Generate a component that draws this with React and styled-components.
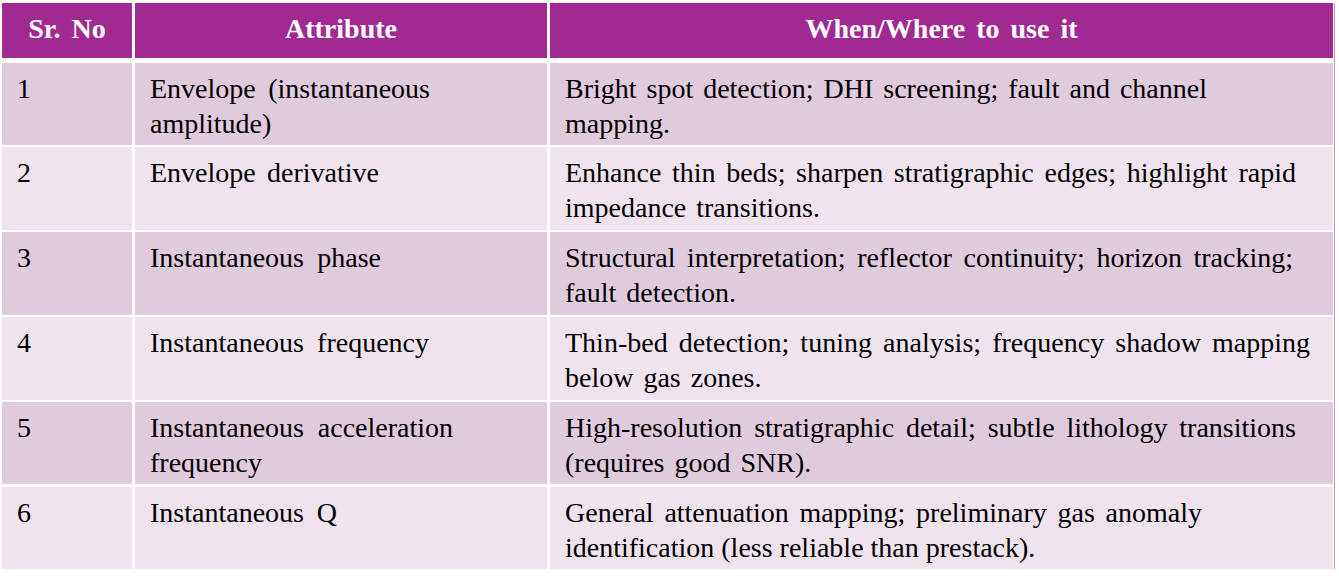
import React from "react";
import styled, { createGlobalStyle } from "styled-components";

const GlobalStyle = createGlobalStyle`
    html, body {
        margin: 0;
        padding: 0;
        background: #ffffff;
    }
    body {
        font-family: "Liberation Serif", "Times New Roman", serif;
    }
`;

const Page = styled.div`
    width: 1339px;
    height: 583px;
    padding: 3px 0 0 2px;
    box-sizing: border-box;
`;

const Table = styled.div`
    width: 1332px;
    display: grid;
    grid-template-columns: 130px 412px 783px;
    column-gap: 3px;
    grid-template-rows: 57px repeat(6, 82.4px);
    row-gap: 2.5px;
    border-right: 1px solid #cf93c6;
`;

const HeadCell = styled.div`
    background: #a02a91;
    color: #ffffff;
    font-weight: bold;
    font-size: 28px;
    word-spacing: 4px;
    display: flex;
    align-items: center;
    justify-content: center;
    margin-bottom: 2.5px;
    padding-bottom: 2px;
`;

const Cell = styled.div`
    background: ${(p) => (p.$odd ? "#dfcbdc" : "#efe4ee")};
    color: #000000;
    font-size: 28px;
    line-height: 35px;
    padding: 8px 15px 0 15px;
    box-sizing: border-box;
    overflow: hidden;
`;

const Line = styled.div`
    white-space: nowrap;
    word-spacing: ${(p) => (p.$w ? 0 : 3)}px;
    width: ${(p) => (p.$w ? `${p.$w}px` : "auto")};
    text-align: justify;
    text-align-last: ${(p) => (p.$w ? "justify" : "left")};
`;

const rows = [
    {
        no: "1",
        attr: [["Envelope (instantaneous", 280], ["amplitude)"]],
        use: [
            ["Bright spot detection; DHI screening; fault and channel", 642],
            ["mapping."],
        ],
    },
    {
        no: "2",
        attr: [["Envelope derivative", 229]],
        use: [
            ["Enhance thin beds; sharpen stratigraphic edges; highlight rapid", 731],
            ["impedance transitions."],
        ],
    },
    {
        no: "3",
        attr: [["Instantaneous phase", 231]],
        use: [
            ["Structural interpretation; reflector continuity; horizon tracking;", 728],
            ["fault detection."],
        ],
    },
    {
        no: "4",
        attr: [["Instantaneous frequency", 279]],
        use: [
            ["Thin-bed detection; tuning analysis; frequency shadow mapping", 745],
            ["below gas zones."],
        ],
    },
    {
        no: "5",
        attr: [["Instantaneous acceleration", 303], ["frequency"]],
        use: [
            ["High-resolution stratigraphic detail; subtle lithology transitions", 731],
            ["(requires good SNR)."],
        ],
    },
    {
        no: "6",
        attr: [["Instantaneous Q", 187]],
        use: [
            ["General attenuation mapping; preliminary gas anomaly", 637],
            ["identification (less reliable than prestack).", 469],
        ],
    },
];

function App() {
    return (
        <Page>
            <GlobalStyle />
            <Table>
                <HeadCell>Sr. No</HeadCell>
                <HeadCell>Attribute</HeadCell>
                <HeadCell>When/Where to use it</HeadCell>
                {rows.map((row, index) => {
                    const odd = index % 2 === 0;
                    return (
                        <React.Fragment key={row.no}>
                            <Cell $odd={odd}>{row.no}</Cell>
                            <Cell $odd={odd}>
                                {row.attr.map(([t, w]) => (
                                    <Line key={t} $w={w}>
                                        {t}
                                    </Line>
                                ))}
                            </Cell>
                            <Cell $odd={odd}>
                                {row.use.map(([t, w]) => (
                                    <Line key={t} $w={w}>
                                        {t}
                                    </Line>
                                ))}
                            </Cell>
                        </React.Fragment>
                    );
                })}
            </Table>
        </Page>
    );
}

export default App;
